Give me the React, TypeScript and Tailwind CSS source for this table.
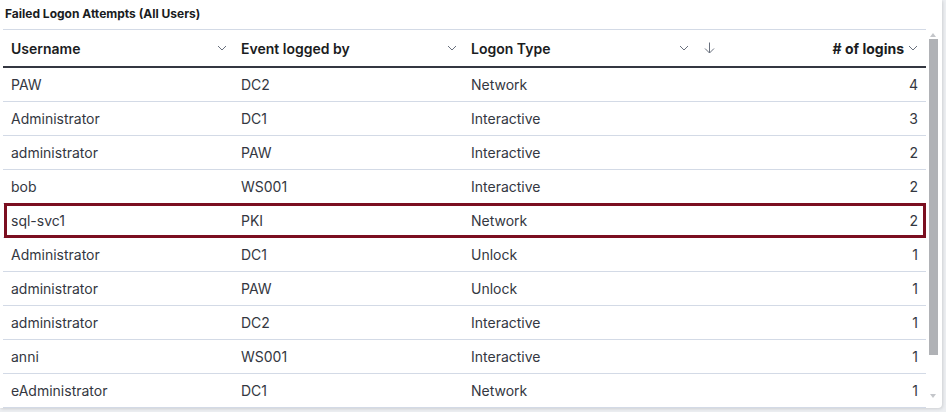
import React from 'react';

interface Row {
  user: string;
  host: string;
  type: string;
  count: number;
  flagged?: boolean;
}

const rows: Row[] = [
  { user: 'PAW', host: 'DC2', type: 'Network', count: 4 },
  { user: 'Administrator', host: 'DC1', type: 'Interactive', count: 3 },
  { user: 'administrator', host: 'PAW', type: 'Interactive', count: 2 },
  { user: 'bob', host: 'WS001', type: 'Interactive', count: 2 },
  { user: 'sql-svc1', host: 'PKI', type: 'Network', count: 2, flagged: true },
  { user: 'Administrator', host: 'DC1', type: 'Unlock', count: 1 },
  { user: 'administrator', host: 'PAW', type: 'Unlock', count: 1 },
  { user: 'administrator', host: 'DC2', type: 'Interactive', count: 1 },
  { user: 'anni', host: 'WS001', type: 'Interactive', count: 1 },
  { user: 'eAdministrator', host: 'DC1', type: 'Network', count: 1 },
];

// tiny header chevron, thin stroke like the EUI arrowDown
const Chevron = () => (
  <svg width="10" height="6" viewBox="0 0 10 6" className="shrink-0">
    <path d="M1 1 L5 5 L9 1" fill="none" stroke="#69707d" strokeWidth="1" />
  </svg>
);

const SortArrow = () => (
  <svg width="11" height="12" viewBox="0 0 11 12" className="shrink-0">
    <path d="M5.5 0.5 V11 M1 6.5 L5.5 11 L10 6.5" fill="none" stroke="#69707d" strokeWidth="1" />
  </svg>
);

const App: React.FC = () => {
  return (
    <div
      className="w-[946px] h-[412px] bg-[#eceef1] overflow-hidden"
      style={{ fontFamily: 'Inter, "Noto Sans", sans-serif' }}
    >
      <div className="w-[942px] h-[408px] bg-white rounded-br-[4px] shadow-[1px_1px_3px_rgba(0,0,0,0.12)] flex flex-col">
        {/* Panel title */}
        <div className="h-[29px] px-[5px] shrink-0">
          <span className="text-[12px] leading-[18px] font-bold text-[#1a1c21]">Failed Logon Attempts (All Users)</span>
        </div>

        <div className="flex flex-1 min-h-0">
          {/* Table */}
          <div className="ml-[3px] w-[923px] overflow-hidden text-[14px] text-[#343741]">
            <div className="flex h-[39px] border-t border-b-2 border-t-[#d3dae6] border-b-[#343741] font-semibold text-[#1a1c21]">
              <div className="w-[230px] flex items-center justify-between pl-[8px] pr-[6px]">
                <span>Username</span>
                <Chevron />
              </div>
              <div className="w-[230px] flex items-center justify-between pl-[8px] pr-[6px]">
                <span>Event logged by</span>
                <Chevron />
              </div>
              <div className="w-[232px] flex items-center justify-between pl-[8px] pr-[6px]">
                <span>Logon Type</span>
                <Chevron />
              </div>
              <div className="w-[231px] flex items-center pl-[9px] pr-[8px]">
                <SortArrow />
                <span className="ml-auto">
                  <span className="font-bold"># of logins</span>
                </span>
                <span className="ml-[4px] flex items-center">
                  <Chevron />
                </span>
              </div>
            </div>

            {rows.map((r, i) => (
              <div key={i} className="relative flex h-[34px] border-b border-[#d3dae6] items-center">
                <div className="w-[230px] pl-[8px] truncate">{r.user}</div>
                <div className="w-[230px] pl-[8px]">{r.host}</div>
                <div className="w-[232px] pl-[8px]">{r.type}</div>
                <div className="w-[231px] pr-[8px] text-right">{r.count}</div>
                {r.flagged && (
                  <div className="absolute left-[1px] right-0 -top-[1px] bottom-[-1px] border-[3px] border-[#7b0f20] pointer-events-none" />
                )}
              </div>
            ))}
          </div>

          {/* Scrollbar */}
          <div className="ml-[1px] w-[12px] flex flex-col items-center pt-[4px] pb-[10px]">
            <svg width="6" height="4" viewBox="0 0 6 4" className="shrink-0">
              <path d="M0 4 L3 0 L6 4 Z" fill="#c4c6ca" />
            </svg>
            <div className="mt-[2px] w-[9px] h-[316px] bg-[#b0b2b6] ml-[1px]" />
            <div className="flex-1" />
            <svg width="6" height="4" viewBox="0 0 6 4" className="shrink-0">
              <path d="M0 0 L3 4 L6 0 Z" fill="#c4c6ca" />
            </svg>
          </div>
        </div>
      </div>
    </div>
  );
};

export default App;
